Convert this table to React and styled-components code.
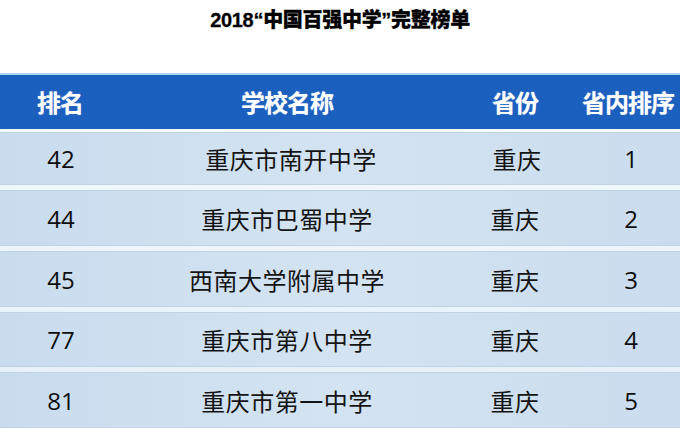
import React from 'react'
import styled, { createGlobalStyle } from 'styled-components'

const Global = createGlobalStyle`
  html, body {
    margin: 0;
    padding: 0;
    background: #fff;
  }
  body {
    font-family: "Noto Sans CJK SC", "Noto Sans", sans-serif;
  }
`

const Page = styled.div`
  width: 680px;
  height: 428px;
  overflow: hidden;
  display: flex;
  flex-direction: column;
`

const Title = styled.h1`
  margin: 0;
  height: 73px;
  padding-top: 7px;
  box-sizing: border-box;
  text-align: center;
  font-family: "Liberation Sans", "Noto Sans CJK SC", sans-serif;
  font-size: 20px;
  font-weight: 900;
  color: #000;
  letter-spacing: -0.3px;
  line-height: 26px;
  -webkit-text-stroke: 0.3px #000;
`

const Columns = `
  display: grid;
  grid-template-columns: 120px 334px 122px 104px;
  align-items: center;
`

const Header = styled.div`
  ${Columns}
  height: 56px;
  background: #1b5fbf;
  border-top: 2px solid #a9d8ee;
  box-sizing: border-box;
`

const HeadCell = styled.div`
  color: #fff;
  font-weight: 700;
  font-size: 24px;
  text-align: center;
  padding-left: ${p => p.$shift || 0}px;
  padding-bottom: 2px;
  letter-spacing: -1px;
  text-shadow: 0 0 1px rgba(255, 255, 255, 0.6);
`

const Rows = styled.div`
  display: flex;
  flex-direction: column;
  gap: 5px;
  padding-top: 3px;
  background: linear-gradient(#f4f9fc, #e4eff7);
`

const Row = styled.div`
  ${Columns}
  height: ${p => p.$h}px;
  background: linear-gradient(90deg, #c9dcee 0%, #d3e3f1 50%, #cadcee 100%);
  border-top: 1px solid #bfd3e6;
  border-bottom: 1px solid #bfd3e6;
  box-sizing: border-box;
`

const Num = styled.div`
  font-family: "Open Sans", "Noto Sans", sans-serif;
  font-size: 24px;
  font-weight: 500;
  color: #0d0d0d;
  text-align: center;
  padding-left: ${p => p.$shift || 0}px;
`

const Name = styled.div`
  font-size: 24px;
  color: #141414;
  text-align: center;
  letter-spacing: 0.5px;
  padding-left: ${p => p.$shift || 0}px;
`

const data = [
  ['42', '重庆市南开中学', '重庆', '1', 53, 8],
  ['44', '重庆市巴蜀中学', '重庆', '2', 56, 0],
  ['45', '西南大学附属中学', '重庆', '3', 56, 0],
  ['77', '重庆市第八中学', '重庆', '4', 55, 0],
  ['81', '重庆市第一中学', '重庆', '5', 56, 0],
]

export default function App() {
  return (
    <Page>
      <Global />
      <Title>2018“中国百强中学”完整榜单</Title>
      <Header>
        <HeadCell $shift={-4}>排名</HeadCell>
        <HeadCell $shift={-8}>学校名称</HeadCell>
        <HeadCell $shift={-16}>省份</HeadCell>
        <HeadCell $shift={-14}>省内排序</HeadCell>
      </Header>
      <Rows>
        {data.map(([rank, school, prov, order, h, s]) => (
          <Row key={rank} $h={h}>
            <Num $shift={2}>{rank}</Num>
            <Name $shift={s}>{school}</Name>
            <Name $shift={s / 2}>{prov}</Name>
            <Num $shift={6}>{order}</Num>
          </Row>
        ))}
      </Rows>
    </Page>
  )
}
